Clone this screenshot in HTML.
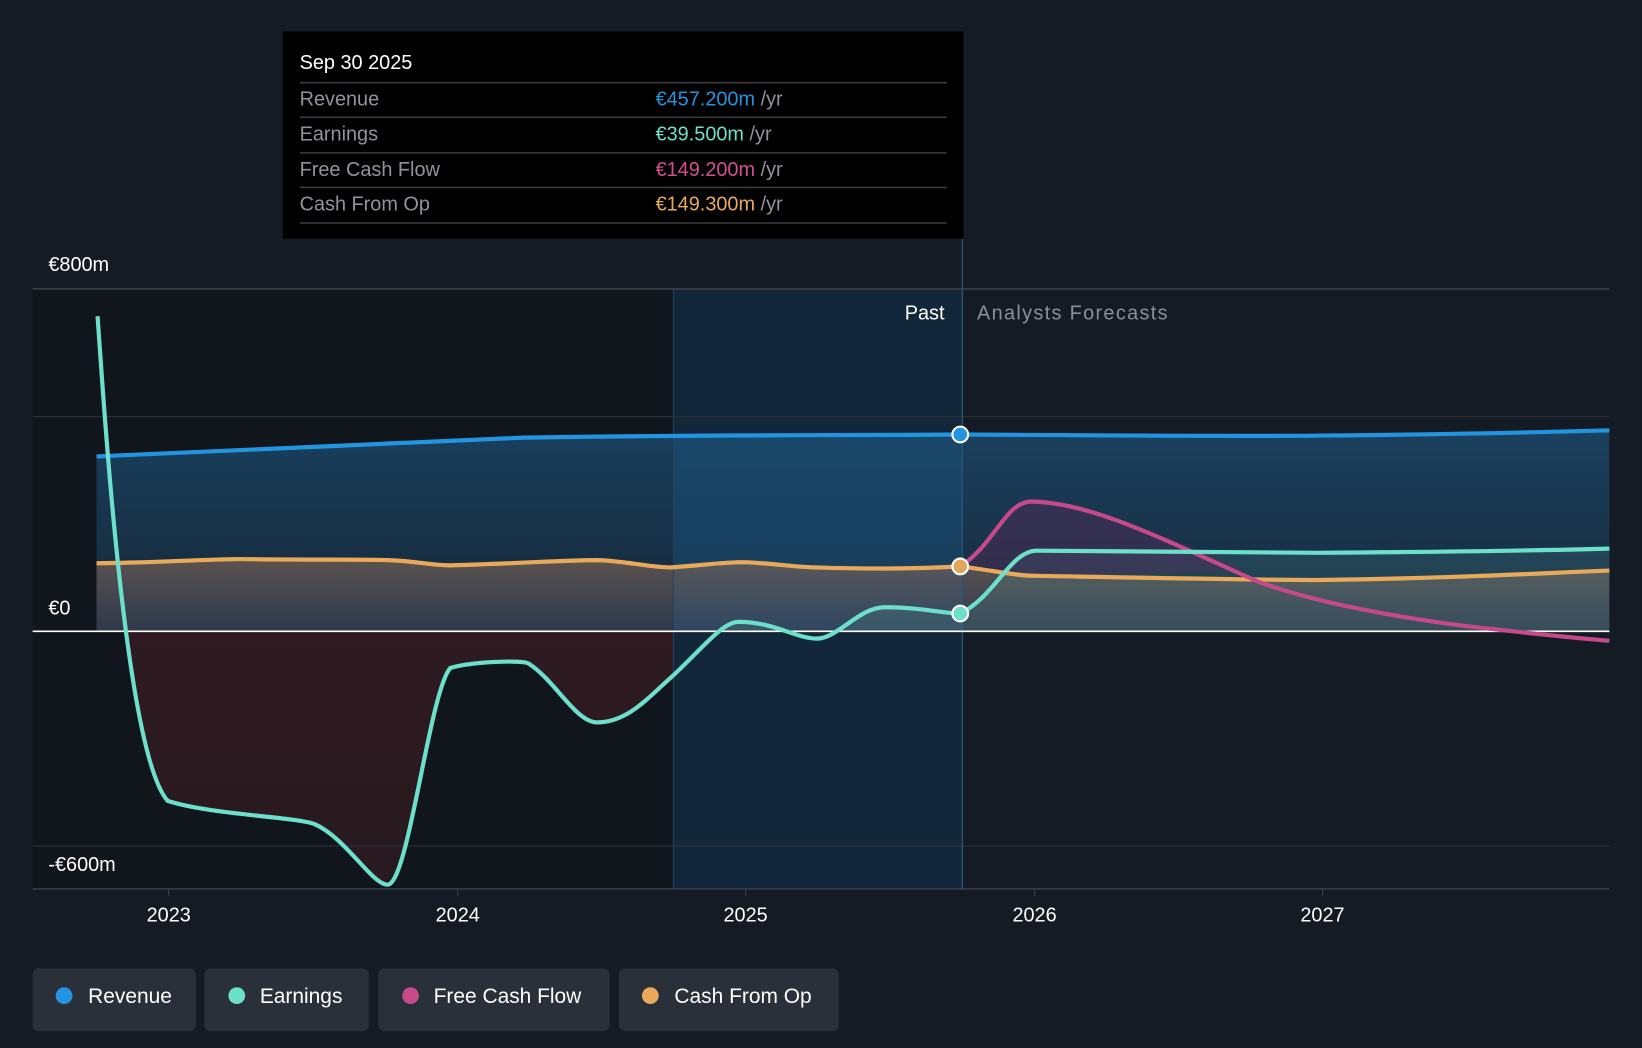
<!DOCTYPE html>
<html><head><meta charset="utf-8"><style>
html,body{margin:0;padding:0;background:#151b24;}
svg{display:block;font-family:"Liberation Sans",Arial,sans-serif;}
</style></head><body>
<svg width="1642" height="1048" viewBox="0 0 1568 1001" xmlns="http://www.w3.org/2000/svg">
<defs>
<linearGradient id="rev" x1="0" y1="0" x2="0" y2="1"><stop offset="0" stop-color="#1b4a6e" stop-opacity="0.8"/><stop offset="1" stop-color="#1b3a55" stop-opacity="0.5"/></linearGradient>
<linearGradient id="cfo" x1="0" y1="0" x2="0" y2="1"><stop offset="0" stop-color="#8a6a55" stop-opacity="0.6"/><stop offset="1" stop-color="#6a6070" stop-opacity="0.3"/></linearGradient>
<linearGradient id="neg" x1="0" y1="0" x2="0" y2="1"><stop offset="0" stop-color="#3d1d24"/><stop offset="1" stop-color="#2a1a20"/></linearGradient>
<clipPath id="below"><rect x="92" y="603" width="551" height="300"/></clipPath>
<clipPath id="above"><rect x="600" y="300" width="940" height="303"/></clipPath>
</defs>
<rect width="1568" height="1001" fill="#151b24"/>
<rect x="31" y="276" width="612" height="573" fill="#11151c"/>
<rect x="643" y="276" width="276" height="573" fill="#13273a"/>
<!-- negative earnings fill -->
<path clip-path="url(#below)" d="M93,302 C100,400 120,720 160,765 C200,778 280,780 300,787 C330,800 355,845 370,845 C390,845 410,660 430,638 C450,632 500,630 505,634 C530,650 550,690 570,690 C600,690 620,665 643,645 L643,603 L93,603 Z" fill="url(#neg)" opacity="0.9"/>
<!-- revenue fill -->
<path d="M92,436 C200,431 300,426 500,418 C700,415 800,416 917,415 C1100,416 1200,417 1260,416 C1400,415 1500,412 1537,411 L1537,603 L92,603 Z" fill="url(#rev)"/>
<rect x="643" y="415" width="276" height="188" fill="#1a5078" opacity="0.35"/>
<!-- cfo fill -->
<path d="M92,538 C160,537 200,534 230,534 C300,535 340,534 370,535 C400,536 410,540 430,540 C500,538 540,535 570,535 C600,536 620,542 640,542 C670,540 690,537 710,537 C740,538 760,542 780,542 C840,544 880,543 917,541 C950,545 970,550 990,550 C1100,552 1200,554 1260,554 C1400,552 1480,547 1537,545 L1537,603 L92,603 Z" fill="url(#cfo)"/>
<!-- gridlines -->
<line x1="31" y1="276" x2="1537" y2="276" stroke="#3a404a" stroke-width="1.5"/>
<line x1="31" y1="398" x2="1537" y2="398" stroke="#2b313b" stroke-width="1"/>
<line x1="31" y1="808" x2="1537" y2="808" stroke="#2b313b" stroke-width="1"/>
<line x1="31" y1="849" x2="1537" y2="849" stroke="#3a404a" stroke-width="1.5"/>
<line x1="643" y1="276" x2="643" y2="849" stroke="#24435e" stroke-width="1"/>
<line x1="919" y1="228" x2="919" y2="849" stroke="#2a5676" stroke-width="1.2"/>
<g stroke="#3a404a"><line x1="161" y1="849" x2="161" y2="856"/><line x1="437" y1="849" x2="437" y2="856"/><line x1="712" y1="849" x2="712" y2="856"/><line x1="988" y1="849" x2="988" y2="856"/><line x1="1263" y1="849" x2="1263" y2="856"/></g>
<!-- earnings positive fill -->
<path clip-path="url(#above)" d="M643,645 C670,620 690,594 705,594 C740,594 760,610 780,610 C800,610 820,580 845,580 C880,580 900,586 917,586 C950,570 965,526 990,526 C1100,527 1200,528 1260,528 C1400,527 1500,525 1537,524 L1537,603 L643,603 Z" fill="#5fb8b0" opacity="0.15"/>
<!-- fcf fill -->
<path d="M917,541 C950,520 960,479 985,479 C1030,480 1100,505 1190,545 L990,550 C970,550 950,545 917,541 Z" fill="#5a2a5a" opacity="0.4"/>
<line x1="31" y1="603" x2="1537" y2="603" stroke="#ffffff" stroke-width="1.5"/>
<!-- lines -->
<path d="M92,436 C200,431 300,426 500,418 C700,415 800,416 917,415 C1100,416 1200,417 1260,416 C1400,415 1500,412 1537,411" fill="none" stroke="#2394df" stroke-width="4"/>
<path d="M92,538 C160,537 200,534 230,534 C300,535 340,534 370,535 C400,536 410,540 430,540 C500,538 540,535 570,535 C600,536 620,542 640,542 C670,540 690,537 710,537 C740,538 760,542 780,542 C840,544 880,543 917,541 C950,545 970,550 990,550 C1100,552 1200,554 1260,554 C1400,552 1480,547 1537,545" fill="none" stroke="#e8aa5a" stroke-width="4"/>
<path d="M917,541 C950,520 960,479 985,479 C1040,480 1100,510 1200,555 C1240,570 1300,585 1400,598 C1470,606 1510,610 1537,612" fill="none" stroke="#c44a8a" stroke-width="4"/>
<path d="M93,302 C100,400 120,720 160,765 C200,778 280,780 300,787 C330,800 355,845 370,845 C390,845 410,660 430,638 C450,632 500,630 505,634 C530,650 550,690 570,690 C600,690 620,665 643,645 C670,620 690,594 705,594 C740,594 760,610 780,610 C800,610 820,580 845,580 C880,580 900,586 917,586 C950,570 965,526 990,526 C1100,527 1200,528 1260,528 C1400,527 1500,525 1537,524" fill="none" stroke="#6de0cc" stroke-width="4"/>
<circle cx="917" cy="415" r="7.5" fill="#2394df" stroke="#fff" stroke-width="2"/>
<circle cx="917" cy="541" r="7.5" fill="#e0a75a" stroke="#fff" stroke-width="2"/>
<circle cx="917" cy="586" r="7.5" fill="#6de0cc" stroke="#fff" stroke-width="2"/>
<!-- labels -->
<g font-size="19" fill="#ffffff">
<text x="46" y="259">€800m</text>
<text x="46" y="587">€0</text>
<text x="46" y="832">-€600m</text>
<text x="902" y="305" text-anchor="end">Past</text>
<text x="933" y="305" fill="#8a9099" textLength="182">Analysts Forecasts</text>
<g text-anchor="middle"><text x="161" y="880">2023</text><text x="437" y="880">2024</text><text x="712" y="880">2025</text><text x="988" y="880">2026</text><text x="1263" y="880">2027</text></g>
</g>
<!-- tooltip -->
<rect x="270" y="30" width="650" height="198" fill="#000"/>
<g stroke="#3a3d42" stroke-width="1.5"><line x1="286" y1="79" x2="904" y2="79"/><line x1="286" y1="112" x2="904" y2="112"/><line x1="286" y1="146" x2="904" y2="146"/><line x1="286" y1="179" x2="904" y2="179"/><line x1="286" y1="213" x2="904" y2="213"/></g>
<g font-size="19">
<text x="286" y="66" fill="#fff">Sep 30 2025</text>
<text x="286" y="101" fill="#8f949b">Revenue</text>
<text x="286" y="134" fill="#8f949b">Earnings</text>
<text x="286" y="168" fill="#8f949b">Free Cash Flow</text>
<text x="286" y="201" fill="#8f949b">Cash From Op</text>
<text x="626" y="101" fill="#2394df">€457.200m <tspan fill="#8f949b">/yr</tspan></text>
<text x="626" y="134" fill="#6de0cc">€39.500m <tspan fill="#8f949b">/yr</tspan></text>
<text x="626" y="168" fill="#d2508f">€149.200m <tspan fill="#8f949b">/yr</tspan></text>
<text x="626" y="201" fill="#e8aa5a">€149.300m <tspan fill="#8f949b">/yr</tspan></text>
</g>
<!-- legend -->
<g font-size="20" fill="#fff">
<rect x="31" y="925" width="156" height="60" rx="6" fill="#2a303a"/><circle cx="61" cy="951" r="8" fill="#2394df"/><text x="84" y="958">Revenue</text>
<rect x="195" y="925" width="157" height="60" rx="6" fill="#2a303a"/><circle cx="226" cy="951" r="8" fill="#6de0cc"/><text x="248" y="958">Earnings</text>
<rect x="361" y="925" width="221" height="60" rx="6" fill="#2a303a"/><circle cx="392" cy="951" r="8" fill="#c44a8a"/><text x="414" y="958">Free Cash Flow</text>
<rect x="591" y="925" width="210" height="60" rx="6" fill="#2a303a"/><circle cx="621" cy="951" r="8" fill="#e8aa5a"/><text x="644" y="958">Cash From Op</text>
</g>
</svg>
</body></html>
